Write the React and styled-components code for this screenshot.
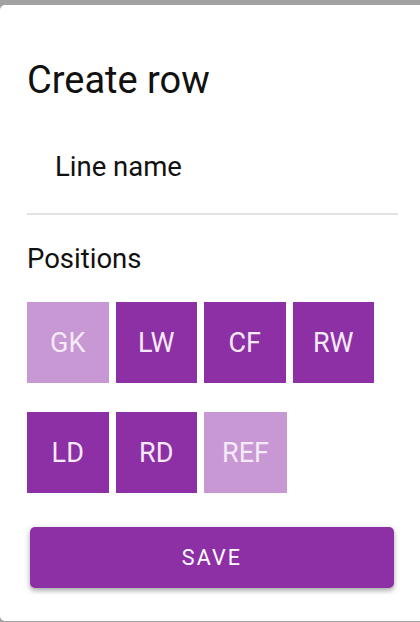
import styled, { createGlobalStyle } from "styled-components";

const positions = [
  { code: "GK", active: false },
  { code: "LW", active: true },
  { code: "CF", active: true },
  { code: "RW", active: true },
  { code: "LD", active: true },
  { code: "RD", active: true },
  { code: "REF", active: false },
];

const App = () => {
  return (
    <>
      <GlobalStyle />
      <Dialog>
        <Title>Create row</Title>
        <NameField>
          <NameLabel>Line name</NameLabel>
        </NameField>
        <SectionLabel>Positions</SectionLabel>
        <Chips>
          {positions.map((p) => (
            <Chip key={p.code} $active={p.active}>
              {p.code}
            </Chip>
          ))}
        </Chips>
        <SaveButton>Save</SaveButton>
      </Dialog>
    </>
  );
};

export default App;

const GlobalStyle = createGlobalStyle`
  html, body {
    margin: 0;
    height: 622px;
    overflow: hidden;
    background: #a2a2a2;
    font-family: Roboto, "Noto Sans", sans-serif;
  }
`;

const Dialog = styled.div`
  margin-top: 5px;
  width: 424px;
  height: 616px;
  box-sizing: border-box;
  background: #fff;
  border-radius: 5px;
  padding: 53px 22px 0 27px;
  display: flex;
  flex-direction: column;
`;

const Title = styled.h2`
  margin: 0;
  font-size: 38px;
  font-weight: 400;
  line-height: 44px;
  color: #111;
`;

const NameField = styled.div`
  margin-top: 49px;
  height: 64px;
  border-bottom: 2px solid #e2e2e2;
  width: 371px;
  padding-left: 28px;
  box-sizing: border-box;
`;

const NameLabel = styled.div`
  font-size: 27.5px;
  line-height: 32px;
  color: #111;
`;

const SectionLabel = styled.div`
  margin-top: 28px;
  font-size: 27.5px;
  line-height: 32px;
  color: #111;
`;

const Chips = styled.div`
  margin-top: 27px;
  display: flex;
  flex-wrap: wrap;
  column-gap: 7px;
  row-gap: 29px;
  width: 360px;
`;

const Chip = styled.div`
  min-width: 81.5px;
  height: 81px;
  padding: 0 18px;
  box-sizing: border-box;
  display: flex;
  align-items: center;
  justify-content: center;
  background: ${(p) => (p.$active ? "#8e30a5" : "#c898d4")};
  color: #f5eaf7;
  font-size: 27px;
`;

const SaveButton = styled.button`
  margin: 34px 0 0 3px;
  width: 364px;
  height: 61px;
  border: none;
  border-radius: 5px;
  background: #8e30a5;
  color: #fff;
  font-family: Roboto, sans-serif;
  font-size: 21.5px;
  font-weight: 400;
  letter-spacing: 2.2px;
  text-transform: uppercase;
  box-shadow: 0 3px 4px rgba(0, 0, 0, 0.25), 0 1px 8px rgba(0, 0, 0, 0.12);
`;
